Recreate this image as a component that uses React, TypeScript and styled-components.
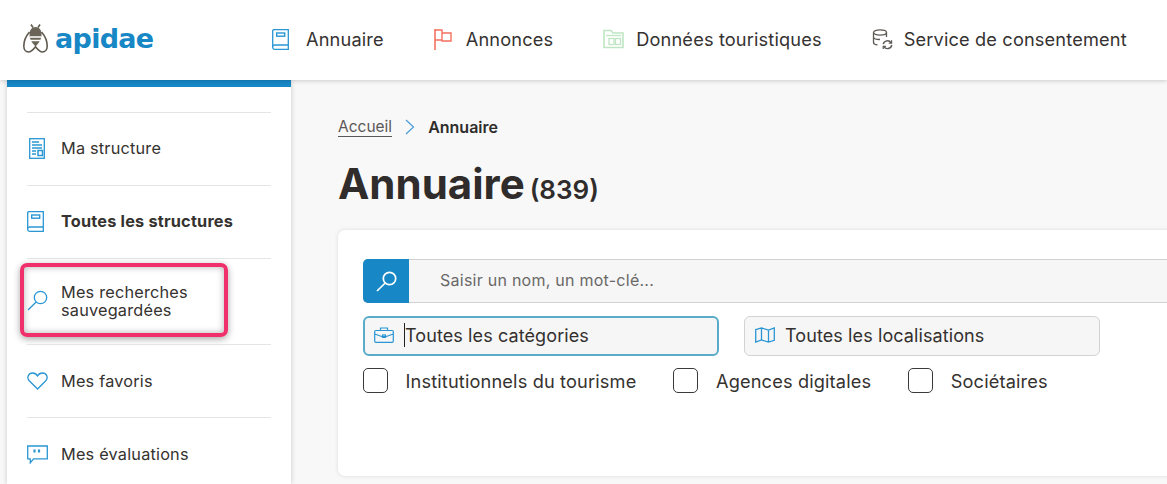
import React from "react";
import styled, { createGlobalStyle } from "styled-components";

const FONT = `Inter, "Open Sans", "Liberation Sans", sans-serif`;
const BLUE = "#1787c5";
const ICON = "#2a96d4";

const Global = createGlobalStyle`
  html, body { margin: 0; padding: 0; background: #f8f8f8; }
  body { font-family: ${FONT}; color: #2f2c2b; overflow: hidden; }
  * { box-sizing: border-box; }
`;

const Page = styled.div`
  width: 1167px;
  height: 484px;
  overflow: hidden;
  display: flex;
  flex-direction: column;
`;

const Header = styled.header`
  height: 80px;
  flex: none;
  background: #fff;
  box-shadow: 0 1px 4px rgba(0, 0, 0, 0.18);
  display: flex;
  align-items: center;
  position: relative;
  z-index: 2;
`;

const Logo = styled.div`
  width: 272px;
  padding-left: 23px;
  display: flex;
  align-items: center;
  gap: 7px;
  margin-top: -4px;
`;

const LogoText = styled.span`
  font-family: "DejaVu Sans", sans-serif;
  font-weight: 700;
  font-size: 27px;
  letter-spacing: -0.7px;
  color: ${BLUE};
  line-height: 1;
`;

const Nav = styled.nav`
  display: flex;
  gap: 50px;
  white-space: nowrap;
`;

const NavItem = styled.div`
  display: flex;
  align-items: center;
  font-size: 18.2px;
  letter-spacing: 0.15px;
  color: #353231;
  margin-top: -2px;
`;

const NavIcon = styled.span<{ $w: number }>`
  width: ${(p) => p.$w}px;
  flex: none;
  display: flex;
  align-items: center;
`;

const Body = styled.div`
  flex: 1;
  display: flex;
  min-height: 0;
`;

const Sidebar = styled.aside`
  width: 284px;
  margin-left: 7px;
  flex: none;
  background: #fff;
  border-top: 7px solid ${BLUE};
  box-shadow: 0 0 5px rgba(0, 0, 0, 0.2);
  padding: 25px 20px 0;
`;

const Row = styled.div<{ $h: number; $bold?: boolean; $lift?: boolean }>`
  height: ${(p) => p.$h}px;
  border-top: 1px solid #e5e5e5;
  padding-bottom: ${(p) => (p.$lift ? 2 : 0)}px;
  display: flex;
  align-items: center;
  gap: 11px;
  position: relative;
  font-size: 16.3px;
  line-height: 18px;
  letter-spacing: 0.2px;
  font-weight: ${(p) => (p.$bold ? 700 : 400)};
  color: #35322f;
`;

const IconSlot = styled.span`
  width: 23px;
  flex: none;
  display: flex;
  justify-content: flex-start;
`;

const Highlight = styled.div`
  position: absolute;
  left: -7px;
  top: 4px;
  width: 208px;
  height: 74px;
  border: 4px solid #f0306a;
  border-radius: 7px;
  box-shadow: 0 2px 7px rgba(0, 0, 0, 0.35), inset 0 0 7px rgba(0, 0, 0, 0.3);
  pointer-events: none;
`;

const Main = styled.main`
  flex: 1;
  min-width: 0;
  padding: 0 0 0 47px;
`;

const Crumbs = styled.div`
  margin-top: 37px;
  height: 20px;
  display: flex;
  align-items: center;
  font-size: 15.5px;
`;

const CrumbLink = styled.span`
  color: #5b5857;
  border-bottom: 1px solid #5b5857;
  line-height: 18px;
`;

const CrumbSep = styled.span`
  margin: 0 13px;
  display: flex;
`;

const CrumbNow = styled.span`
  font-weight: 600;
  font-size: 16px;
  color: #2f2c2b;
`;

const TitleRow = styled.div`
  margin-top: 21px;
  display: flex;
  align-items: baseline;
  gap: 5px;
  height: 52px;
`;

const Title = styled.h1`
  margin: 0;
  font-size: 42px;
  font-weight: 700;
  line-height: 52px;
  letter-spacing: 0;
  color: #2f2c2b;
`;

const Count = styled.span`
  font-size: 26px;
  font-weight: 600;
  color: #2f2c2b;
`;

const Card = styled.section`
  margin-top: 20px;
  height: 246px;
  width: 900px;
  background: #fff;
  border-radius: 7px;
  box-shadow: 0 0 4px rgba(0, 0, 0, 0.12);
  padding: 29px 0 0 25px;
`;

const Search = styled.div`
  height: 44px;
  display: flex;
  background: #f6f6f6;
  border: 1px solid #d2d2d2;
  border-right: 0;
  border-radius: 5px 0 0 5px;
`;

const SearchBtn = styled.div`
  width: 46px;
  margin: -1px 0 -1px -1px;
  background: ${BLUE};
  border-radius: 5px 0 0 5px;
  display: flex;
  align-items: center;
  justify-content: center;
`;

const Placeholder = styled.div`
  margin-left: 31px;
  padding-bottom: 2px;
  display: flex;
  align-items: center;
  font-size: 16px;
  letter-spacing: 0.25px;
  color: #6a6867;
`;

const Selects = styled.div`
  margin-top: 13px;
  display: flex;
  gap: 25px;
`;

const Select = styled.div<{ $focus?: boolean }>`
  width: 356px;
  height: 40px;
  display: flex;
  align-items: center;
  gap: 10px;
  padding: 0 0 2px ${(p) => (p.$focus ? 9 : 10)}px;
  background: #f6f6f6;
  border-radius: 6px;
  border: ${(p) => (p.$focus ? "2px solid #5aabc9" : "1px solid #d2d2d2")};
  font-size: 18px;
  letter-spacing: 0.1px;
  color: #33302e;
`;

const Caret = styled.span`
  border-left: 1px solid #222;
  height: 24px;
  display: flex;
  align-items: center;
  white-space: nowrap;
`;

const Checks = styled.div`
  margin-top: 12px;
  display: flex;
  gap: 37px;
`;

const Check = styled.label`
  display: flex;
  align-items: center;
  gap: 17.5px;
  padding-bottom: 1px;
  font-size: 18.2px;
  letter-spacing: 0.15px;
  color: #35322f;
`;

const Box = styled.span`
  width: 25px;
  height: 25px;
  flex: none;
  background: #fff;
  border: 1px solid #3a3a3a;
  border-radius: 5px;
`;

const s = { fill: "none", strokeWidth: 1.3 } as const;

const BookIcon = () => (
  <svg width="17" height="21" viewBox="0 0 17 21" {...s} stroke={ICON}>
    <path d="M1.5.7h14.8v19.6H2.5a1.8 1.8 0 0 1-1.8-1.8V1.5z" />
    <path d="M.8 17.2c.3-.9 1-1.2 1.8-1.2h13.7" />
    <rect x="4.7" y="4" width="8" height="3.2" strokeWidth="1.4" />
  </svg>
);

const FlagIcon = () => (
  <svg width="18" height="21" viewBox="0 0 18 21" {...s} stroke="#f5705f">
    <path d="M1 0v21" strokeWidth="1.6" />
    <path d="M1 1h7v3M1 11h7V4h9v8H8v-1" strokeWidth="1.4" />
  </svg>
);

const DataIcon = () => (
  <svg width="21" height="20" viewBox="0 0 21 20" {...s} stroke="#bfe6c4">
    <path d="M1 18.5V1.5h7l2 2.500h10v14.500z" strokeWidth="1.6" />
    <path d="M3 6.500h15" />
    <rect x="6" y="9.500" width="5" height="6" />
    <rect x="12.500" y="9.500" width="5" height="6" />
  </svg>
);

const ConsentIcon = () => (
  <svg width="21" height="21" viewBox="0 0 21 21" {...s} stroke="#5e5a55">
    <ellipse cx="8" cy="3.500" rx="6.500" ry="2.600" />
    <path d="M1.500 3.500v10c0 1.200 1.800 2.200 4 2.400M14.500 3.500V8M1.500 8c0 1.400 2.700 2.500 6.500 2.500M1.500 13c0 .6.500 1.200 1 1.400" />
    <path d="M11.200 15.200a4.400 4.400 0 0 1 8-1.400M19.800 16a4.400 4.400 0 0 1-8 1.600" strokeWidth="1.400" />
    <path d="M19.600 11.300v2.800h-2.800M11.200 20v-2.600h2.700" strokeWidth="1.200" />
  </svg>
);

const BeeIcon = () => (
  <svg width="25" height="29" viewBox="0 0 25 29" fill="none" stroke="#5f5a4f" strokeWidth="1.6">
    <path d="M8 .5l2 3M17 .5l-2 3" />
    <path d="M12.500 3c4 0 6 3.500 6 7.500 0 5-3 9-6 12-3-3-6-7-6-12 0-4 2-7.500 6-7.500z" fill="#6a6558" stroke="none" />
    <path d="M6.900 13h11.200M7.800 16.500h9.400" stroke="#fff" strokeWidth="1.500" />
    <path d="M6.500 8C3 12 .8 17.500.8 22c0 3.500 2 6 4.700 6 3.200 0 5.200-3 7-5.200 1.800 2.200 3.800 5.200 7 5.200 2.700 0 4.700-2.500 4.700-6 0-4.500-2.200-10-5.700-14" />
  </svg>
);

const DocIcon = () => (
  <svg width="18" height="21" viewBox="-2 0 18 21" {...s} stroke={ICON}>
    <rect x=".7" y=".7" width="14.600" height="19.600" />
    <path d="M3 4h7M3 7h10M3 10h10M3 13h4M3 16h4" strokeWidth="1.500" />
    <rect x="9" y="12.500" width="4.500" height="5" strokeWidth="1.500" />
  </svg>
);

const LensIcon = ({ color = ICON, weight = 1.3 }: { color?: string; weight?: number }) => (
  <svg width="21" height="21" viewBox="0 0 21 21" fill="none" stroke={color} strokeWidth={weight}>
    <circle cx="13.500" cy="7.500" r="6.200" />
    <path d="M9.200 12 1 20" />
  </svg>
);

const HeartIcon = () => (
  <svg width="21" height="18" viewBox="0 0 21 18" {...s} stroke={ICON}>
    <path d="M10.500 17 2 8.500C-.500 5.500 1.500 1 5.500 1c2.300 0 4 1.300 5 3 1-1.700 2.700-3 5-3 4 0 6 4.500 3.500 7.500z" />
  </svg>
);

const ChatIcon = () => (
  <svg width="21" height="19" viewBox="0 0 21 19" fill="none" stroke={ICON} strokeWidth="1.300">
    <path d="M.7 1h19.600v12.800H6.500l-3.200 4v-4H.7z" />
    <path d="M7.500 4.500v3M12 4.500v3" strokeWidth="2.200" />
  </svg>
);

const CaseIcon = () => (
  <svg width="20" height="16" viewBox="0 0 20 16" fill="none" stroke={ICON} strokeWidth="1.200">
    <rect x=".7" y="3.500" width="18.600" height="11.800" rx="1" />
    <path d="M6.500 3.500V1h7v2.500M.7 7l7 2.500h4.600l7-2.500" />
    <rect x="8.500" y="8" width="3" height="2.400" />
  </svg>
);

const MapIcon = () => (
  <svg width="20" height="16" viewBox="0 0 20 16" fill="none" stroke={ICON} strokeWidth="1.300">
    <path d="M.7 2.700 6.500 1l7 2 5.800-2v12.300L13.500 15l-7-2-5.800 2zM6.500 1v12M13.500 3v12" />
  </svg>
);

const Chevron = () => (
  <svg width="10" height="16" viewBox="0 0 10 16" fill="none" stroke="#4a9ad4" strokeWidth="1.200">
    <path d="M1 1l7.500 7L1 15" />
  </svg>
);

export default function App() {
  return (
    <Page>
      <Global />
      <Header>
        <Logo>
          <BeeIcon />
          <LogoText>apidae</LogoText>
        </Logo>
        <Nav>
          <NavItem><NavIcon $w={34}><BookIcon /></NavIcon>Annuaire</NavItem>
          <NavItem><NavIcon $w={32}><FlagIcon /></NavIcon>Annonces</NavItem>
          <NavItem><NavIcon $w={33}><DataIcon /></NavIcon>Données touristiques</NavItem>
          <NavItem><NavIcon $w={32}><ConsentIcon /></NavIcon>Service de consentement</NavItem>
        </Nav>
      </Header>
      <Body>
        <Sidebar>
          <Row $h={73} $lift><IconSlot><DocIcon /></IconSlot>Ma structure</Row>
          <Row $h={73} $lift $bold><IconSlot><BookIcon /></IconSlot>Toutes les structures</Row>
          <Row $h={86} $lift>
            <IconSlot><LensIcon /></IconSlot>
            <span>Mes recherches<br />sauvegardées</span>
            <Highlight />
          </Row>
          <Row $h={73}><IconSlot><HeartIcon /></IconSlot>Mes favoris</Row>
          <Row $h={73}><IconSlot><ChatIcon /></IconSlot>Mes évaluations</Row>
        </Sidebar>
        <Main>
          <Crumbs>
            <CrumbLink>Accueil</CrumbLink>
            <CrumbSep><Chevron /></CrumbSep>
            <CrumbNow>Annuaire</CrumbNow>
          </Crumbs>
          <TitleRow>
            <Title>Annuaire</Title>
            <Count>(839)</Count>
          </TitleRow>
          <Card>
            <Search>
              <SearchBtn><LensIcon color="#fff" weight={1.7} /></SearchBtn>
              <Placeholder>Saisir un nom, un mot-clé...</Placeholder>
            </Search>
            <Selects>
              <Select $focus><CaseIcon /><Caret>Toutes les catégories</Caret></Select>
              <Select><MapIcon />Toutes les localisations</Select>
            </Selects>
            <Checks>
              <Check><Box />Institutionnels du tourisme</Check>
              <Check><Box />Agences digitales</Check>
              <Check><Box />Sociétaires</Check>
            </Checks>
          </Card>
        </Main>
      </Body>
    </Page>
  );
}
